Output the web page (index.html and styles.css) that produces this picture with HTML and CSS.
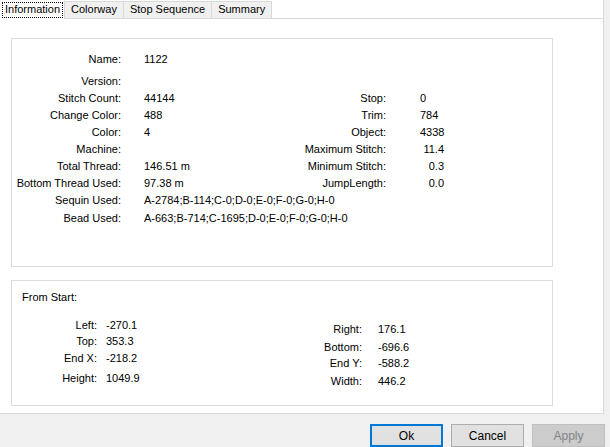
FILE: index.html
```html
<!DOCTYPE html>
<html lang="en">
<head>
    <meta charset="UTF-8">
    <title>Design Properties</title>
    <link rel="stylesheet" href="styles.css">
</head>
<body>
    <div class="window">
        <div class="sheet">
            <div class="tabs">
                <div class="tab active"><span class="focus">Information</span></div>
                <div class="tab">Colorway</div>
                <div class="tab">Stop Sequence</div>
                <div class="tab">Summary</div>
            </div>
            <div class="page">
                <div class="group info">
                    <div class="info-grid">
                        <span class="lbl">Name:</span><span class="val">1122</span>
                        <span class="lbl">Version:</span><span class="val"></span>
                        <span class="lbl">Stitch Count:</span><span class="val">44144</span>
                        <span class="lbl2">Stop:</span><span class="val2">0</span>
                        <span class="lbl">Change Color:</span><span class="val">488</span>
                        <span class="lbl2">Trim:</span><span class="val2">784</span>
                        <span class="lbl">Color:</span><span class="val">4</span>
                        <span class="lbl2">Object:</span><span class="val2">4338</span>
                        <span class="lbl">Machine:</span><span class="val"></span>
                        <span class="lbl2">Maximum Stitch:</span><span class="val2 num">11.4</span>
                        <span class="lbl">Total Thread:</span><span class="val">146.51 m</span>
                        <span class="lbl2">Minimum Stitch:</span><span class="val2 num">0.3</span>
                        <span class="lbl">Bottom Thread Used:</span><span class="val">97.38 m</span>
                        <span class="lbl2">JumpLength:</span><span class="val2 num">0.0</span>
                        <span class="lbl">Sequin Used:</span><span class="val wide">A-2784;B-114;C-0;D-0;E-0;F-0;G-0;H-0</span>
                        <span class="lbl">Bead Used:</span><span class="val wide">A-663;B-714;C-1695;D-0;E-0;F-0;G-0;H-0</span>
                    </div>
                </div>
                <div class="group origin">
                    <div class="group-title">From Start:</div>
                    <div class="coords">
                        <div class="coord-col left">
                            <span class="lbl">Left:</span><span class="val">-270.1</span>
                            <span class="lbl">Top:</span><span class="val">353.3</span>
                            <span class="lbl">End X:</span><span class="val">-218.2</span>
                            <span class="lbl">Height:</span><span class="val">1049.9</span>
                        </div>
                        <div class="coord-col right">
                            <span class="lbl">Right:</span><span class="val">176.1</span>
                            <span class="lbl">Bottom:</span><span class="val">-696.6</span>
                            <span class="lbl">End Y:</span><span class="val">-588.2</span>
                            <span class="lbl">Width:</span><span class="val">446.2</span>
                        </div>
                    </div>
                </div>
            </div>
        </div>
        <div class="footer">
            <button class="btn default">Ok</button>
            <button class="btn">Cancel</button>
            <button class="btn" disabled>Apply</button>
        </div>
    </div>
</body>
</html>
```

FILE: styles.css
```css
body { margin: 0; background: #f0f0f0; font-family: "Liberation Sans", Arial, sans-serif; font-size: 11px; color: #000; }
.window { width: 610px; height: 447px; display: flex; flex-direction: column; overflow: hidden; }

/* tab control */
.sheet { width: 603px; height: 417px; background: #fff; border-right: 1px solid #d9d9d9; display: flex; flex-direction: column; }
.tabs { height: 18px; display: flex; align-items: flex-end; }
.tab { height: 16px; line-height: 15px; padding: 0 6px; background: #f0f0f0; border: 1px solid #d9d9d9; border-bottom: none; margin-left: -1px; white-space: nowrap; }
.tab.active { height: 18px; line-height: 16px; padding: 0 1px; background: #fff; margin-left: 0; margin-bottom: -1px; position: relative; z-index: 1; border-color: #fff #d9d9d9 #fff #fff; }
.focus { display: inline-block; height: 16px; line-height: 15px; padding: 0 3px; outline: 1px dotted #000; outline-offset: -1px; }
.page { flex: 1; border-top: 1px solid #d9d9d9; border-bottom: 1px solid #d9d9d9; padding: 19px 0 0 11px; }

/* group boxes */
.group { width: 540px; border: 1px solid #dcdcdc; }
.info { height: 227px; }
.origin { height: 124px; margin-top: 13px; }

.info-grid { display: grid; grid-template-columns: 109px 173px 92px 58px; grid-template-rows: 22px repeat(7, 17px) 18px 17px; line-height: 17px; margin-top: 12px; }
.info-grid .lbl { grid-column: 1; text-align: right; white-space: nowrap; }
.info-grid .val { padding-left: 23px; white-space: nowrap; }
.info-grid .wide { grid-column: 2 / 5; }
.lbl2 { grid-column: 3; text-align: right; white-space: nowrap; }
.val2 { padding-left: 34px; white-space: nowrap; }
.val2.num { text-align: right; }

.group-title { line-height: 17px; margin: 8px 0 0 10px; }
.coords { display: flex; margin-left: 25px; }
.coord-col { display: grid; grid-template-columns: 60px auto; line-height: 17px; }
.coord-col .lbl { text-align: right; }
.coord-col.left { width: 265px; margin-top: 11px; grid-template-rows: 16px 17px 20px 17px; }
.coord-col.left .val { padding-left: 9px; }
.coord-col.right { margin-top: 15px; grid-template-rows: 18px 16px 18px 17px; }
.coord-col.right .val { padding-left: 16px; }

/* dialog buttons */
.footer { flex: 1; display: flex; justify-content: flex-end; gap: 8px; padding: 10px 5px 0 0; }
.btn { width: 73px; height: 23px; flex: none; padding: 0; background: #e1e1e1; border: 1px solid #adadad; font: inherit; font-size: 12px; color: #000; }
.btn.default { border: 2px solid #0078d7; }
.btn:disabled { background: #cccccc; border-color: #bfbfbf; color: #838383; }
```
